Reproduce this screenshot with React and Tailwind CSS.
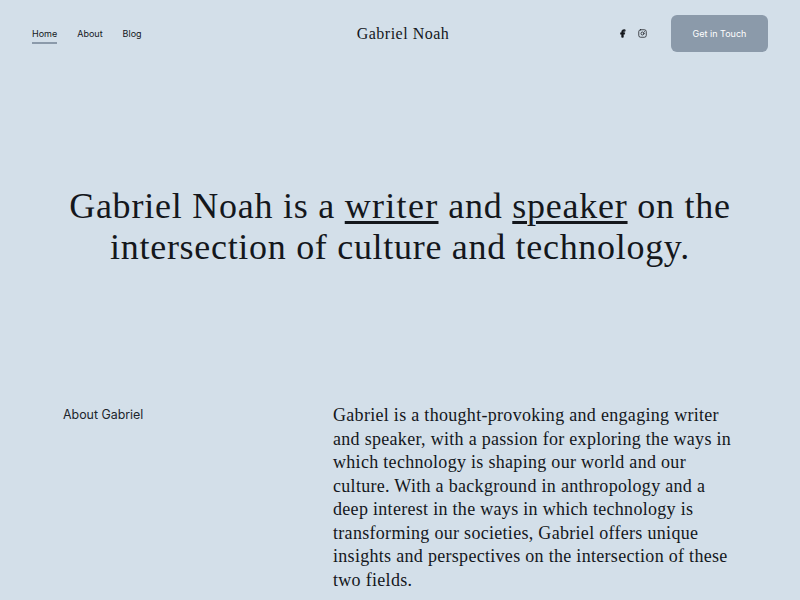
import { Facebook, Instagram } from 'lucide-react';

export default function App() {
  return (
    <div className="w-[800px] h-[600px] overflow-hidden bg-[#d3dfe9] text-[#14171c] font-['Inter',sans-serif]">
      {/* Header */}
      <header className="grid grid-cols-[1fr_auto_1fr] items-center h-[37px] mt-[15px] px-8">
        <nav className="flex gap-5 text-[9px] leading-3 text-[#14171c]">
          <a className="pt-1 pb-[2px] border-b-2 border-[#8b9aaa]">Home</a>
          <a className="pt-1 pb-[2px] border-b-2 border-transparent">About</a>
          <a className="pt-1 pb-[2px] border-b-2 border-transparent">Blog</a>
        </nav>
        <div className="ml-[6px] font-['Liberation_Serif',serif] text-[16px] tracking-[0.5px]">Gabriel Noah</div>
        <div className="flex items-center justify-end">
          <Facebook className="w-[9px] h-[9px] fill-current" />
          <Instagram className="w-[9px] h-[9px] ml-[11px]" />
          <button className="ml-6 w-[97px] h-[37px] pt-px rounded-md bg-[#8b9aaa] text-white text-[9px]">Get in Touch</button>
        </div>
      </header>

      {/* Hero */}
      <h1 className="mt-[134px] text-center font-['Liberation_Serif',serif] text-[36px] leading-[41px] tracking-[0.7px]">
        <span className="tracking-[0.76px]">
          Gabriel Noah is a <span className="underline decoration-[3px] underline-offset-[3px] tracking-[1.3px]">writer</span> and <span className="underline decoration-[3px] underline-offset-[3px]">speaker</span> on the
        </span>
        <br />
        intersection of culture and technology.
      </h1>

      {/* About */}
      <section className="mt-[136px] flex pl-[63px]">
        <div className="w-[270px] pt-[2px] text-[12.4px] text-[#20252c]">About Gabriel</div>
        <p className="w-[405px] font-['Liberation_Serif',serif] text-[18px] leading-[23.5px] tracking-[0.3px]">
          Gabriel is a thought-provoking and engaging writer and speaker, with a passion for exploring the ways in which technology is shaping our world and our culture. With a background in anthropology and a deep interest in the ways in which technology is transforming our societies, Gabriel offers unique insights and perspectives on the intersection of these two fields.
        </p>
      </section>
    </div>
  );
}
